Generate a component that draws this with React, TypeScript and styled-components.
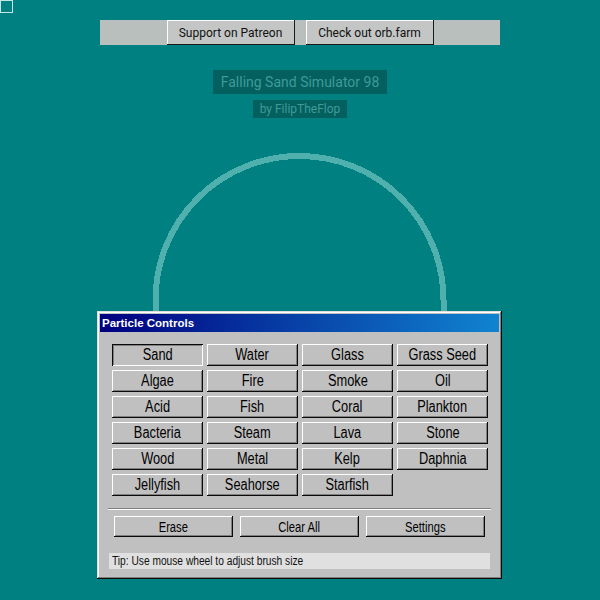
import styled, { createGlobalStyle } from 'styled-components';

const GlobalStyle = createGlobalStyle`
  html, body {
    margin: 0;
    padding: 0;
    background: #008080;
  }
  body {
    width: 600px;
    height: 600px;
    overflow: hidden;
  }
`;

const ELEMENTS = [
  'Sand', 'Water', 'Glass', 'Grass Seed',
  'Algae', 'Fire', 'Smoke', 'Oil',
  'Acid', 'Fish', 'Coral', 'Plankton',
  'Bacteria', 'Steam', 'Lava', 'Stone',
  'Wood', 'Metal', 'Kelp', 'Daphnia',
  'Jellyfish', 'Seahorse', 'Starfish',
];

const App = () => {
  return (
    <>
      <GlobalStyle />
      <Page>
        <DebugBox />
        <LinkBar>
          <LinkButton>Support on Patreon</LinkButton>
          <LinkButton>Check out orb.farm</LinkButton>
        </LinkBar>
        <Title>Falling Sand Simulator 98</Title>
        <Byline>by FilipTheFlop</Byline>
        <Stage>
          {/* the sand world's boundary wall */}
          <svg width='600' height='470' viewBox='0 0 600 470' shapeRendering='crispEdges'>
            <path
              d='M 155.5 200 L 155.5 170 A 144 144 0 0 1 443.5 170 L 443.5 200'
              fill='none'
              stroke='#4fb0ae'
              strokeWidth='6'
            />
          </svg>
          <ControlWindow>
            <TitleBar>Particle Controls</TitleBar>
            <WindowBody>
              <ElementGrid>
                {ELEMENTS.map((name) => (
                  <ElementButton key={name} $active={name === 'Sand'}>
                    <Narrow $scale={0.8}>{name}</Narrow>
                  </ElementButton>
                ))}
              </ElementGrid>
              <Separator />
              <ActionRow>
                <ActionButton><Narrow $scale={0.8}>Erase</Narrow></ActionButton>
                <ActionButton><Narrow $scale={0.8}>Clear All</Narrow></ActionButton>
                <ActionButton><Narrow $scale={0.8}>Settings</Narrow></ActionButton>
              </ActionRow>
              <TipBar>
                <Narrow $scale={0.85} $origin='left'>
                  Tip: Use mouse wheel to adjust brush size
                </Narrow>
              </TipBar>
            </WindowBody>
          </ControlWindow>
        </Stage>
      </Page>
    </>
  );
};

const Page = styled.div`
  width: 600px;
  height: 600px;
  display: flex;
  flex-direction: column;
  align-items: center;
  font-family: Roboto, 'Liberation Sans', sans-serif;
`;

const DebugBox = styled.div`
  align-self: flex-start;
  width: 11px;
  height: 11px;
  border: 1px solid #c6e6e4;
`;

const LinkBar = styled.div`
  margin-top: 7px;
  width: 400px;
  height: 25px;
  background: #b9bfbd;
  display: flex;
  justify-content: center;
  gap: 11px;
`;

const LinkButton = styled.button`
  height: 25px;
  width: 128px;
  padding: 0;
  border: none;
  background: #c3c6c5;
  box-shadow: inset -1px -1px #1a1a1a, inset 1px 1px #ffffff;
  font-family: Roboto, 'Liberation Sans', sans-serif;
  font-size: 12px;
  color: #111;
`;

const Title = styled.div`
  margin-top: 25px;
  padding: 0 8px;
  height: 24px;
  line-height: 24px;
  background: #03605f;
  color: #3e9b98;
  font-size: 14px;
`;

const Byline = styled.div`
  margin-top: 6px;
  padding: 0 7px;
  height: 18px;
  line-height: 18px;
  background: #03605f;
  color: #3e9b98;
  font-size: 12px;
`;

const Stage = styled.div`
  position: relative;
  margin-top: 12px;
  width: 600px;
  height: 470px;
  svg {
    display: block;
  }
`;

const ControlWindow = styled.div`
  position: absolute;
  left: 97px;
  top: 181px;
  width: 405px;
  box-sizing: border-box;
  padding: 3px;
  background: #c0c0c0;
  box-shadow: inset -1px -1px #0a0a0a, inset 1px 1px #dfdfdf,
    inset -2px -2px #808080, inset 2px 2px #ffffff;
  font-family: 'Liberation Sans', Arial, sans-serif;
`;

// the panel's face font is a condensed sans; squeeze Arial-metric text to fit
const Narrow = styled.span<{ $scale: number; $origin?: string }>`
  display: inline-block;
  white-space: nowrap;
  transform: scaleX(${(p) => p.$scale});
  transform-origin: ${(p) => p.$origin ?? 'center'};
`;

const TitleBar = styled.div`
  height: 18px;
  line-height: 18px;
  padding: 0 2px;
  background: linear-gradient(90deg, #000080, #1084d0);
  color: #fff;
  font-weight: bold;
  font-size: 11.5px;
`;

const WindowBody = styled.div`
  padding: 12px 6px 7px 6px;
  display: flex;
  flex-direction: column;
`;

const ElementGrid = styled.div`
  margin: 0 6px;
  display: grid;
  grid-template-columns: repeat(4, 91px);
  grid-auto-rows: 22px;
  gap: 4px;
`;

const bevel = `
  border: none;
  padding: 0;
  background: #c0c0c0;
  color: #000;
  font-family: 'Liberation Sans', Arial, sans-serif;
  overflow: hidden;
`;

const ElementButton = styled.button<{ $active?: boolean }>`
  ${bevel}
  font-size: 16px;
  box-shadow: ${(p) =>
    p.$active
      ? 'inset 1px 1px #0a0a0a, inset -1px -1px #ffffff, inset 2px 2px #808080'
      : 'inset -1px -1px #0a0a0a, inset 1px 1px #ffffff, inset -2px -2px #808080'};
`;

const Separator = styled.div`
  margin: 12px 2px 0;
  height: 0;
  border-top: 1px solid #808080;
  border-bottom: 1px solid #ffffff;
`;

const ActionRow = styled.div`
  margin: 6px 8px 0;
  display: grid;
  grid-template-columns: repeat(3, 1fr);
  gap: 7px;
`;

const ActionButton = styled.button`
  ${bevel}
  height: 21px;
  font-size: 14px;
  box-shadow: inset -1px -1px #0a0a0a, inset 1px 1px #ffffff, inset -2px -2px #808080;
`;

const TipBar = styled.div`
  margin: 16px 3px 0;
  height: 16px;
  line-height: 16px;
  padding: 0 3px;
  background: #e0e0e0;
  font-size: 12px;
  color: #111;
`;

export default App;
